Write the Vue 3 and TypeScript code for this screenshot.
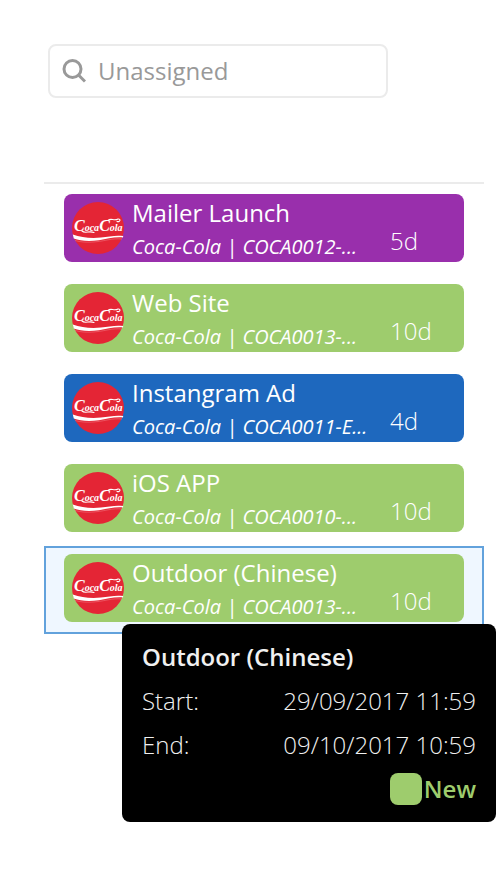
<script setup lang="ts">
import { ref } from 'vue'

interface Task {
  title: string
  client: string
  code: string
  days: number
  tone: 'purple' | 'green' | 'blue'
}

const query = ref('')
const selected = ref(4)

const tasks: Task[] = [
  { title: 'Mailer Launch', client: 'Coca-Cola', code: 'COCA0012-...', days: 5, tone: 'purple' },
  { title: 'Web Site', client: 'Coca-Cola', code: 'COCA0013-...', days: 10, tone: 'green' },
  { title: 'Instangram Ad', client: 'Coca-Cola', code: 'COCA0011-E...', days: 4, tone: 'blue' },
  { title: 'iOS APP', client: 'Coca-Cola', code: 'COCA0010-...', days: 10, tone: 'green' },
  { title: 'Outdoor (Chinese)', client: 'Coca-Cola', code: 'COCA0013-...', days: 10, tone: 'green' },
]
</script>

<template>
  <main class="panel">
    <label class="search">
      <svg class="search-icon" viewBox="0 0 24 24" aria-hidden="true">
        <circle cx="10.5" cy="10" r="8.5" />
        <path d="M16 15.500 L23 22.500" />
      </svg>
      <input v-model="query" type="text" placeholder="Unassigned" aria-label="Search tasks" />
    </label>

    <ul class="tasks">
      <li
        v-for="(task, i) in tasks"
        :key="i"
        class="row"
        :class="{ selected: i === selected }"
        @click="selected = i"
      >
        <article class="card" :class="task.tone">
          <svg class="logo" viewBox="0 0 52 52" aria-hidden="true">
            <circle cx="26" cy="26" r="26" fill="#e42535" />
            <path d="M0.800 32.500 C9 35.500 19 36.500 29 35.500 C37 34.500 44 33 51.200 34 L51 35.500 C42 34.800 35 37 27 38.200 C17 39.500 8 39 1.800 36.500 Z" fill="#fff" />
            <path d="M3 38.500 C14 41.500 25 40 35 38 C41 36.800 46 36.500 50 37" fill="none" stroke="#f0808a" stroke-width="0.5" />
            <text class="script" x="2" y="29"><tspan class="cap">C</tspan>oca<tspan class="cap">C</tspan>ola</text>
            <path d="M10 29 C13 32 17 28.500 22 30.500 M36 18.500 C39 15.500 42 19.500 46 17 C49 16.500 48.500 20.500 45 19.500" fill="none" stroke="#fff" stroke-width="1.1" stroke-linecap="round" />
          </svg>
          <div class="info">
            <h2>{{ task.title }}</h2>
            <p>{{ task.client }} | {{ task.code }}</p>
          </div>
          <span class="days">{{ task.days }}d</span>
        </article>

        <aside v-if="i === selected && i === 4" class="tooltip" role="tooltip">
          <h3>{{ task.title }}</h3>
          <dl>
            <div><dt>Start:</dt><dd>29/09/2017 11:59</dd></div>
            <div><dt>End:</dt><dd>09/10/2017 10:59</dd></div>
          </dl>
          <div class="status"><span class="swatch"></span>New</div>
        </aside>
      </li>
    </ul>
  </main>
</template>

<style>
body {
  margin: 0;
  background: #fff;
}
</style>

<style scoped>
.panel {
  box-sizing: border-box;
  min-height: 100vh;
  padding: 44px 20px 44px 44px;
  font-family: "Open Sans", "Noto Sans", sans-serif;
  font-size: 24px;
}

.search {
  box-sizing: border-box;
  display: flex;
  align-items: center;
  gap: 12px;
  width: calc(100% - 100px);
  height: 54px;
  margin: 0 0 84px 4px;
  padding: 0 12px;
  border: 2px solid #ebebeb;
  border-radius: 8px;
}

.search-icon {
  flex: none;
  width: 24px;
  height: 24px;
  fill: none;
  stroke: #999;
  stroke-width: 3;
}

.search input {
  flex: 1;
  min-width: 0;
  padding: 0 0 2px;
  border: 0;
  outline: 0;
  background: transparent;
  font: inherit;
  color: #555;
}

.search input::placeholder {
  color: #999;
  opacity: 1;
}

.tasks {
  display: flex;
  flex-direction: column;
  gap: 2px;
  margin: 0;
  padding: 2px 0 0;
  border-top: 2px solid #ebebeb;
  list-style: none;
}

.row {
  position: relative;
  padding: 6px 18px 10px;
  border: 2px solid transparent;
}

.row.selected {
  border-color: #62a2dc;
  background: #eff7ff;
}

.card {
  display: flex;
  align-items: flex-start;
  height: 68px;
  border-radius: 8px;
  color: #fff;
}

.purple { background: #992fac; }
.green { background: #9ecc6d; }
.blue { background: #1e68be; }

.logo {
  flex: none;
  width: 52px;
  height: 52px;
  margin: 8px;
}

.script {
  fill: #fff;
  font-family: "Liberation Serif", serif;
  font-size: 10px;
  font-style: italic;
  font-weight: 700;
}

.cap {
  font-size: 16px;
}

.info {
  flex: 1;
  min-width: 0;
  white-space: nowrap;
}

.info h2 {
  margin: 0;
  font-size: 24px;
  font-weight: 400;
  line-height: 38px;
}

.info p {
  margin: 0;
  font-size: 20px;
  font-style: italic;
  line-height: 30px;
}

.days {
  width: 74px;
  padding-top: 32px;
  font-weight: 300;
  line-height: 30px;
}

.tooltip {
  position: absolute;
  z-index: 1;
  top: 76px;
  left: 76px;
  right: -14px;
  box-sizing: border-box;
  padding: 11px 20px;
  border-radius: 8px;
  background: #000;
  color: #f0f0f0;
  font-weight: 300;
  line-height: 44px;
}

.tooltip h3 {
  margin: 0;
  font-size: 24px;
  font-weight: 600;
  line-height: 44px;
}

.tooltip dl {
  margin: 0;
}

.tooltip dl div {
  display: flex;
  justify-content: space-between;
}

.tooltip dd {
  margin: 0;
}

.status {
  display: flex;
  align-items: center;
  justify-content: flex-end;
  gap: 2px;
  font-weight: 600;
  color: #9ecc6d;
}

.swatch {
  width: 32px;
  height: 32px;
  border-radius: 8px;
  background: #9ecc6d;
}
</style>
